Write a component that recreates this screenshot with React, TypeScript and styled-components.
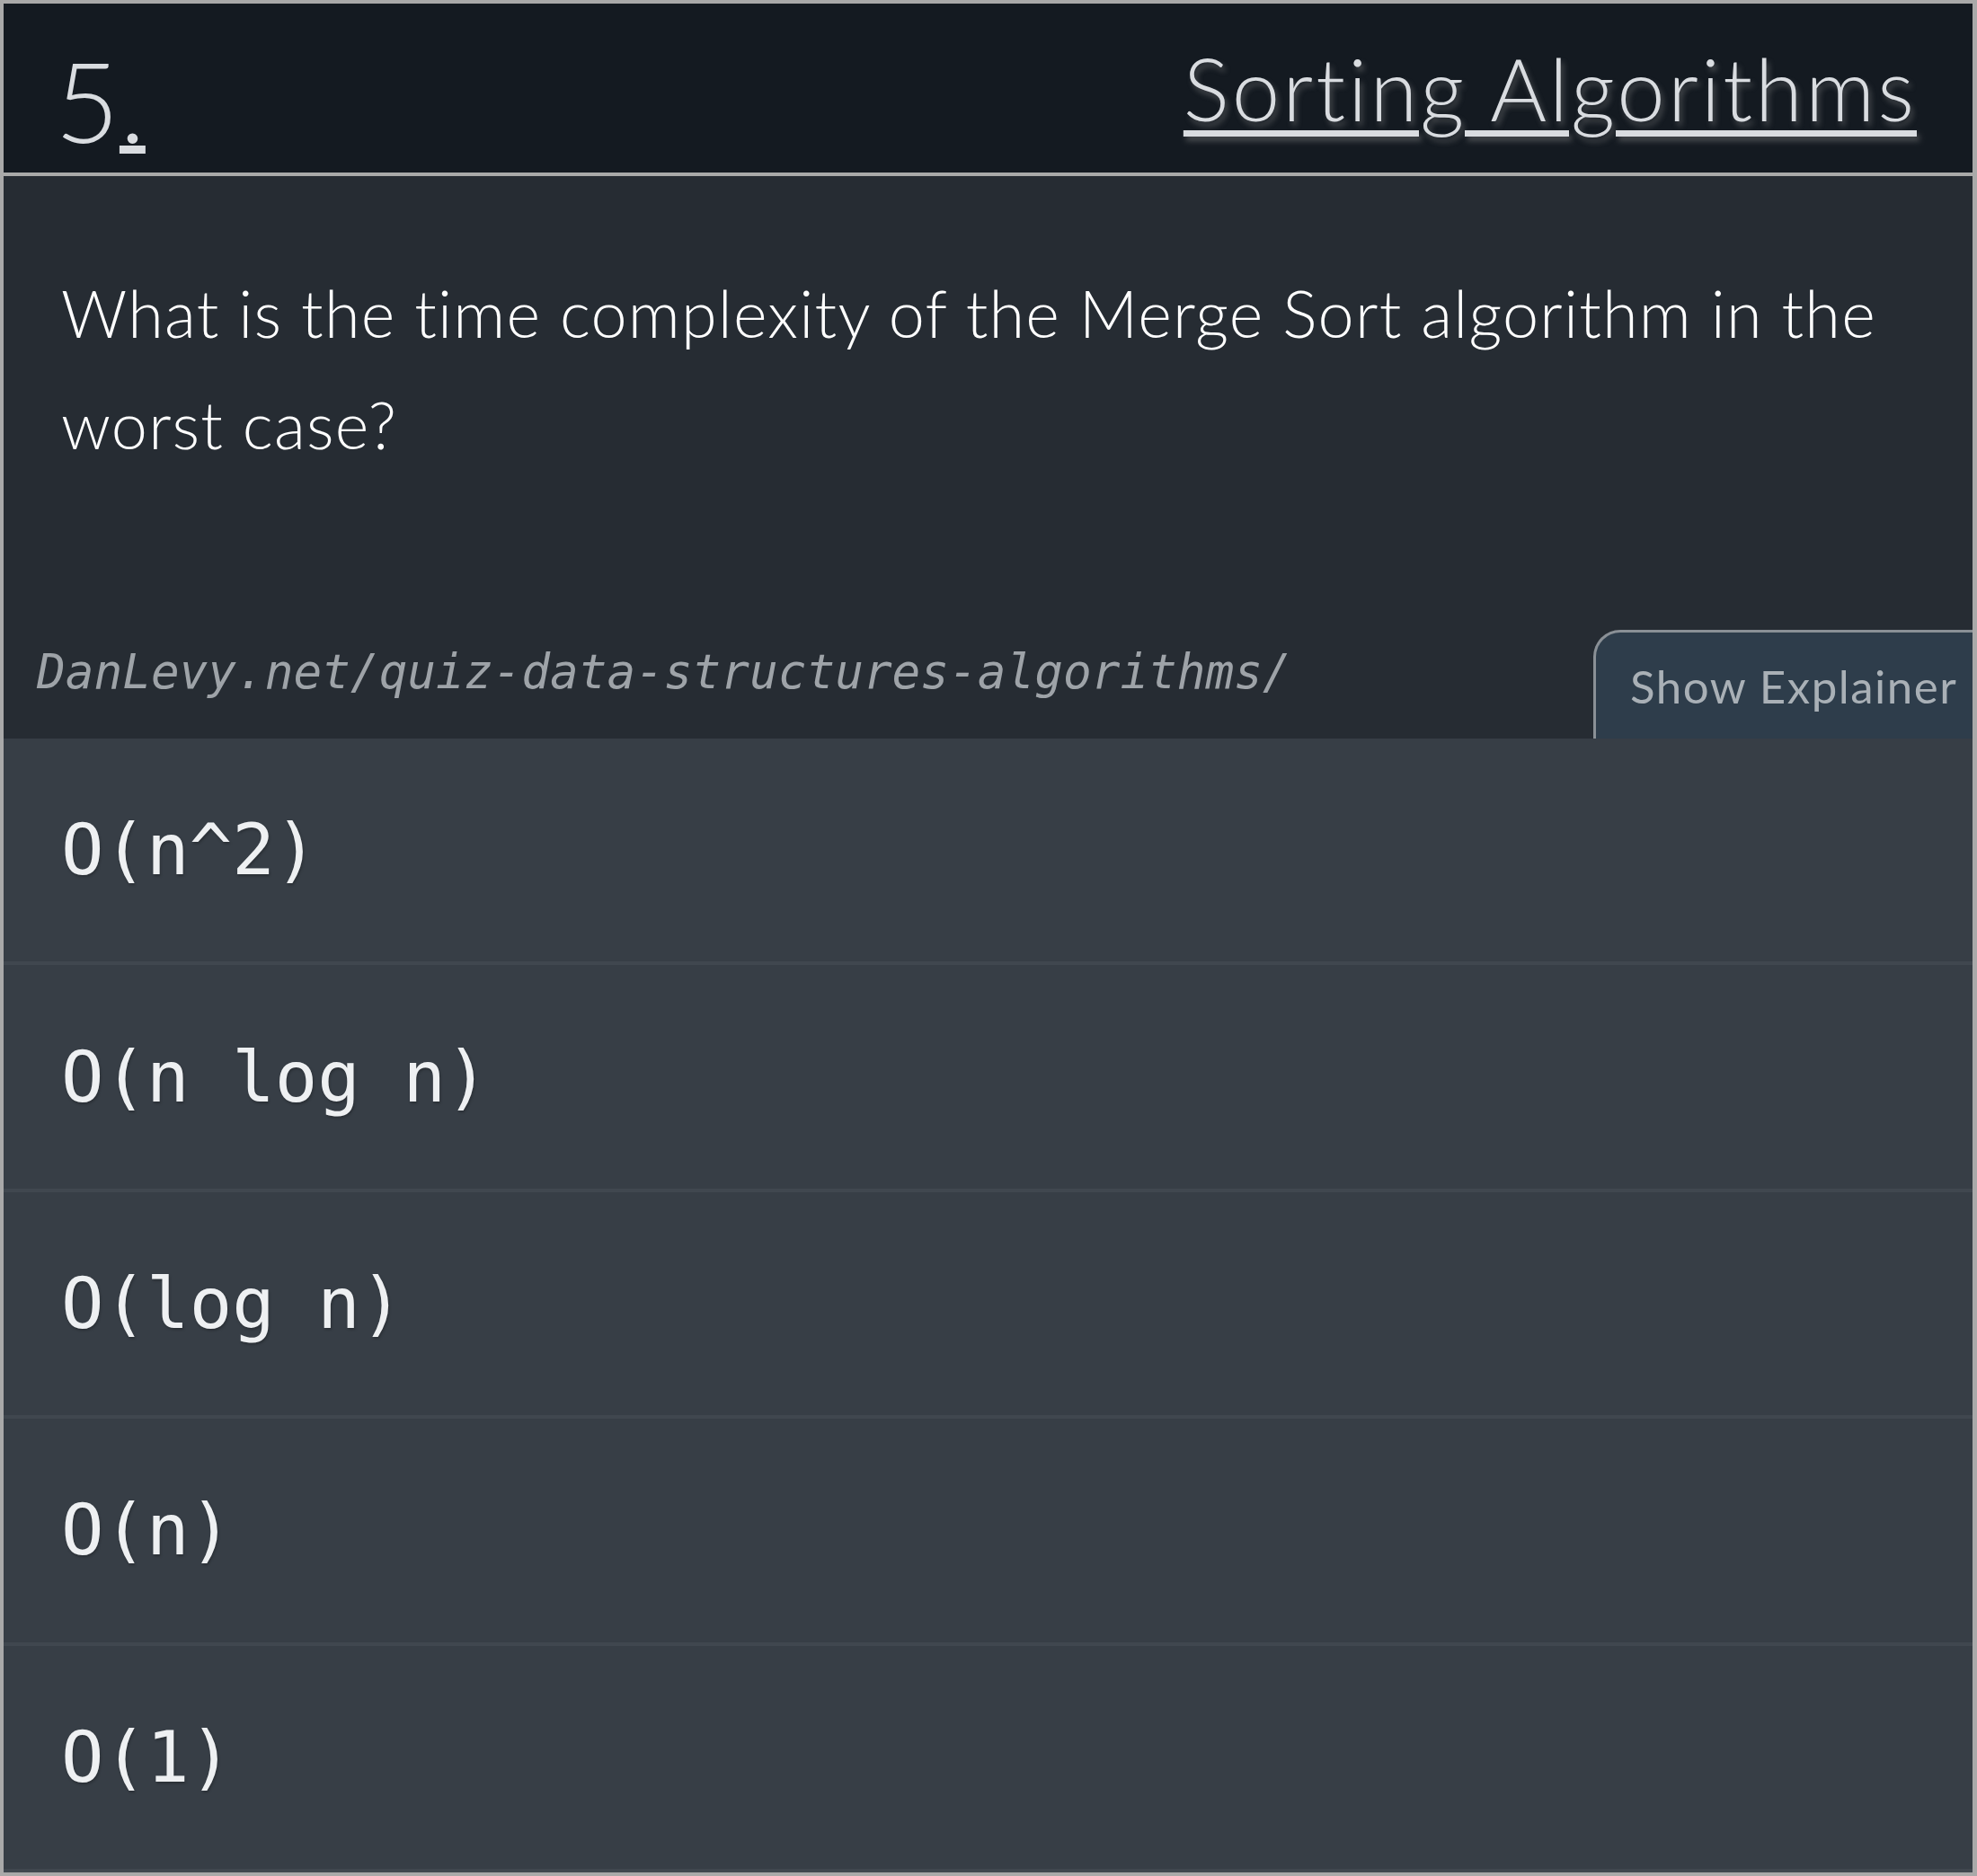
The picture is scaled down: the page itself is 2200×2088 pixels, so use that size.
import React from 'react';
import styled, { createGlobalStyle } from 'styled-components';

const GlobalStyle = createGlobalStyle`
  html, body {
    margin: 0;
    padding: 0;
    background: #a9a9a9;
  }
  * {
    box-sizing: border-box;
  }
`;

const Card = styled.div`
  width: 2200px;
  height: 2088px;
  border: 4px solid #a9a9a9;
  border-right-width: 5px;
  background: #373e46;
  display: flex;
  flex-direction: column;
  overflow: hidden;
`;

const Header = styled.header`
  height: 192px;
  flex: 0 0 auto;
  display: flex;
  align-items: center;
  justify-content: space-between;
  padding: 0 62px 0 57px;
  background: #141a21;
  border-bottom: 4px solid #a9a9a9;
  color: #d9dce0;
  font-family: Lato, "Open Sans", sans-serif;
  font-weight: 300;
`;

const Num = styled.h2`
  margin: 26px 0 0;
  font-size: 124px;
  line-height: 1;
  font-weight: 300;
`;

const Dot = styled.span`
  text-decoration: underline;
  text-decoration-thickness: 9px;
  text-underline-offset: 3px;
`;

const Title = styled.a`
  font-size: 96px;
  line-height: 1;
  color: #d9dce0;
  letter-spacing: 3px;
  text-decoration: underline;
  text-decoration-thickness: 7px;
  text-underline-offset: 10px;
  text-shadow: 3px 5px 6px rgba(140, 140, 140, 0.45);
`;

const QuestionBox = styled.section`
  background: #262c33;
  flex: 0 0 auto;
  display: flex;
  flex-direction: column;
`;

const Question = styled.p`
  margin: 0;
  padding: 90px 60px 167px 64px;
  font-family: Lato, "Open Sans", sans-serif;
  font-weight: 300;
  font-size: 72px;
  line-height: 124px;
  color: #ffffff;
  letter-spacing: 1.2px;
`;

const Footer = styled.div`
  height: 121px;
  display: flex;
  align-items: stretch;
  justify-content: space-between;
`;

const SourceLink = styled.span`
  align-self: center;
  margin: 0 0 28px 37px;
  font-family: "DejaVu Sans Mono", monospace;
  font-style: italic;
  font-size: 52.7px;
  color: #9ea3a8;
`;

const ExplainerTab = styled.button`
  width: 422px;
  padding: 0 0 0 38px;
  margin: 0;
  text-align: left;
  background: #2e3d4b;
  border: 3px solid #8a9096;
  border-right: none;
  border-bottom: none;
  border-top-left-radius: 30px;
  color: #a9b0b6;
  font-family: Lato, "Open Sans", sans-serif;
  font-weight: 400;
  font-size: 51px;
  letter-spacing: 1.5px;
  white-space: nowrap;
  cursor: pointer;
`;

const Options = styled.ol`
  list-style: none;
  margin: 0;
  padding: 0;
  flex: 1 1 auto;
  display: flex;
  flex-direction: column;
`;

const Option = styled.li`
  flex: 1 1 0;
  display: flex;
  align-items: center;
  padding: 0 64px;
  background: #373e46;
  border-bottom: 4px solid #40474f;
  font-family: "DejaVu Sans Mono", monospace;
  font-size: 79px;
  color: #eef0f2;
  text-shadow: 1px 2px 3px rgba(0, 0, 0, 0.25);
`;

const answers = ['O(n^2)', 'O(n log n)', 'O(log n)', 'O(n)', 'O(1)'];

export default function App() {
  return (
    <>
      <GlobalStyle />
      <Card>
        <Header>
          <Num>
            5<Dot>.</Dot>
          </Num>
          <Title href="#sorting">Sorting Algorithms</Title>
        </Header>
        <QuestionBox>
          <Question>
            What is the time complexity of the Merge Sort algorithm in the worst case?
          </Question>
          <Footer>
            <SourceLink>DanLevy.net/quiz-data-structures-algorithms/</SourceLink>
            <ExplainerTab>Show Explainer</ExplainerTab>
          </Footer>
        </QuestionBox>
        <Options>
          {answers.map((a) => (
            <Option key={a}>{a}</Option>
          ))}
        </Options>
      </Card>
    </>
  );
}
